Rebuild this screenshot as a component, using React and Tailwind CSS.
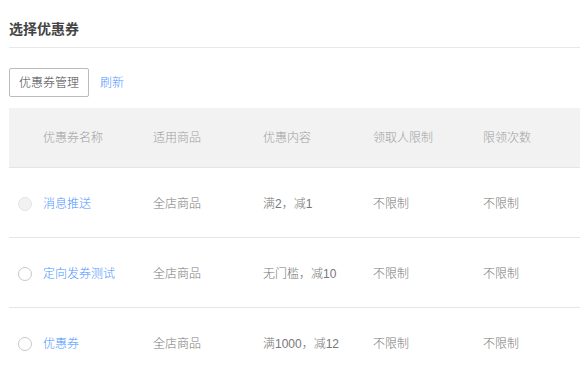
const coupons = [
  { name: "消息推送", scope: "全店商品", content: "满2，减1", limit: "不限制", times: "不限制", disabled: true },
  { name: "定向发券测试", scope: "全店商品", content: "无门槛，减10", limit: "不限制", times: "不限制" },
  { name: "优惠券", scope: "全店商品", content: "满1000，减12", limit: "不限制", times: "不限制" },
];

const headers = ["优惠券名称", "适用商品", "优惠内容", "领取人限制", "限领次数"];

function Radio({ disabled }) {
  return (
    <span
      className={
        "block h-[14px] w-[14px] rounded-full border " +
        (disabled ? "border-[#e5e5e5] bg-[#f2f2f2]" : "border-[#c8c8c8] bg-white")
      }
    />
  );
}

export default function App() {
  return (
    <div
      className="h-[368px] w-[580px] overflow-hidden bg-white pl-[9px]"
      style={{ fontFamily: '"Liberation Sans", "Noto Sans CJK SC", sans-serif' }}
    >
      <div className="w-[640px]">
        <div className="border-b border-[#e8e8e8] pb-[9px] pt-[20px]">
          <h2 className="text-[14px] font-bold leading-[18px] text-[#444]">选择优惠券</h2>
        </div>

        <div className="mt-[20px] flex items-center gap-[11px]">
          <button className="h-[29px] rounded-[2px] border border-[#bbb] bg-white px-[9px] text-[12px] font-light text-[#444]">
            优惠券管理
          </button>
          <span className="text-[12px] font-light text-[#4a94ff]">刷新</span>
        </div>

        <div className="mt-[11px]">
          <div className="flex h-[60px] items-center border-b border-[#e5e5e5] bg-[#f2f2f2] text-[12px] font-light text-[#a0a0a0]">
            <div className="w-[34px]" />
            {headers.map((h) => (
              <div key={h} className="w-[110px]">
                {h}
              </div>
            ))}
          </div>

          {coupons.map((c) => (
            <div
              key={c.name}
              className="flex h-[70px] items-center border-b border-[#e5e5e5] pt-[2px] text-[12px] font-light text-[#777]"
            >
              <div className="w-[34px] pl-[9px]">
                <Radio disabled={c.disabled} />
              </div>
              <div className="w-[110px] text-[#4a94ff]">{c.name}</div>
              <div className="w-[110px]">{c.scope}</div>
              <div className="w-[110px]">{c.content}</div>
              <div className="w-[110px]">{c.limit}</div>
              <div className="w-[110px]">{c.times}</div>
            </div>
          ))}
        </div>
      </div>
    </div>
  );
}
